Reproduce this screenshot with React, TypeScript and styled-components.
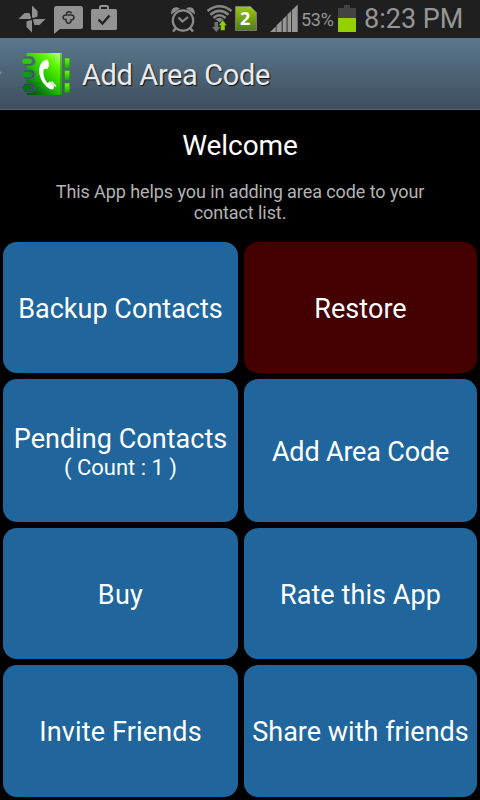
import React from "react";
import styled, { createGlobalStyle } from "styled-components";

const GlobalStyle = createGlobalStyle`
  * { box-sizing: border-box; }
  body { margin: 0; background: #000; }
`;

const Screen = styled.div`
  width: 480px;
  height: 800px;
  display: flex;
  flex-direction: column;
  overflow: hidden;
  background: #000;
  color: #fff;
  font-family: Roboto, "Liberation Sans", sans-serif;
`;

const StatusBar = styled.header`
  height: 38px;
  flex: none;
  display: flex;
  background: #1f1f1f;
  color: #969696;
`;

const StatusIcons = styled.svg`
  display: block;
  width: 300px;
  height: 38px;
  flex: none;
`;

const BatteryLevel = styled.span`
  width: 34px;
  margin-left: 1px;
  font-size: 18px;
  line-height: 40px;
  letter-spacing: -0.3px;
  white-space: nowrap;
`;

const BatteryIcon = styled.svg`
  display: block;
  width: 18px;
  height: 38px;
  margin-left: 3px;
`;

const Clock = styled.time`
  margin-left: 8px;
  font-size: 27px;
  line-height: 38px;
  letter-spacing: 0;
  white-space: nowrap;
`;

const TitleBar = styled.div`
  height: 72px;
  flex: none;
  display: flex;
  background: linear-gradient(#5a788d, #3e4e5f);
  border-bottom: 1px solid #50697a;
`;

const AppLogo = styled.svg`
  display: block;
  width: 72px;
  height: 71px;
  flex: none;
`;

const AppTitle = styled.h1`
  margin: 0 0 0 10px;
  font-size: 29px;
  font-weight: 400;
  line-height: 74px;
  letter-spacing: -0.37px;
  color: #ebebeb;
  text-shadow: 1px 1px 1px #111;
  white-space: nowrap;
`;

const Intro = styled.section`
  height: 132px;
  flex: none;
  text-align: center;
`;

const Welcome = styled.h2`
  margin: 18px 0 0;
  font-size: 28px;
  font-weight: 400;
  line-height: 36px;
  letter-spacing: -0.1px;
`;

const Description = styled.p`
  margin: 17px 50px 0;
  font-size: 18px;
  line-height: 21px;
  letter-spacing: -0.08px;
  color: #b3b3b3;
`;

const Grid = styled.main`
  display: grid;
  grid-template-columns: 235px 233px;
  grid-template-rows: 131px 143px 131px 132px;
  gap: 6px;
  padding: 0 3px;
`;

const Tile = styled.button<{ $danger?: boolean }>`
  display: flex;
  flex-direction: column;
  align-items: center;
  justify-content: center;
  border: 0;
  padding: 2px 0 0;
  border-radius: 14px;
  background: ${(p) => (p.$danger ? "#440000" : "#20669c")};
  color: #fff;
  font-family: inherit;
`;

const TileLabel = styled.span<{ $spacing: number }>`
  font-size: 27px;
  line-height: 32px;
  letter-spacing: ${(p) => p.$spacing}px;
  white-space: nowrap;
`;

const TileCount = styled.span`
  font-size: 22px;
  line-height: 26px;
  white-space: nowrap;
`;

const tiles = [
  { label: "Backup Contacts", spacing: 0.02 },
  { label: "Restore", spacing: 0.05, danger: true },
  { label: "Pending Contacts", spacing: 0.03, count: "( Count : 1 )" },
  { label: "Add Area Code", spacing: -0.18 },
  { label: "Buy", spacing: 0.3 },
  { label: "Rate this App", spacing: 0.08 },
  { label: "Invite Friends", spacing: 0.15 },
  { label: "Share with friends", spacing: 0.02 },
];

function NotificationIcons() {
  return (
    <StatusIcons viewBox="0 0 300 38">
      <defs>
        <linearGradient id="sim" x2="0" y2="1">
          <stop stopColor="#9ac715" />
          <stop offset="1" stopColor="#4f7d10" />
        </linearGradient>
      </defs>
      {/* pinwheel */}
      <g fill="#8f8f8f">
        <path d="M32 5.500 37.500 11V16.500L32 18.500Z" />
        <path d="M45.500 19 39.500 25H34.500L32.500 19Z" />
        <path d="M32 32.500 26.500 27V21.500L32 19.500Z" />
        <path d="M18.500 19 24.500 13H29.500L31.500 19Z" />
      </g>
      <circle cx="32" cy="19" r="1.600" fill="#1f1f1f" />
      {/* message */}
      <path d="M56.500 6H80.500Q83 6 83 8.500V26.500Q83 29 80.500 29H60L54 34V8.500Q54 6 56.500 6Z" fill="#929292" />
      <path
        d="M71.500 13.500C70.500 10.500 66 11.500 66.500 15C62 14.500 62 20 66 19.500C65.500 24.500 71.500 24.500 71 20C75 20 75 14.500 71 15H67.500"
        fill="none" stroke="#2c2c2c" strokeWidth="1.500"
      />
      {/* shopping bag */}
      <rect x="91" y="9" width="26" height="21" rx="1.600" fill="#929292" />
      <path d="M100 9.500V7.500Q100 6 101.500 6H106.500Q108 6 108 7.500V9.500" fill="none" stroke="#929292" strokeWidth="2" />
      <path d="M98.500 19.500 102.500 23.500 109.500 15.500" fill="none" stroke="#222" strokeWidth="2.400" />
      {/* alarm clock */}
      <g fill="none" stroke="#8b8b8b">
        <circle cx="183" cy="20.500" r="10.200" strokeWidth="2.200" />
        <path d="M178.500 17.500 182.500 21.500 188 17" strokeWidth="2.200" />
        <path d="M176 28 173 31.500M190 28 193 31.500" strokeWidth="2.600" />
      </g>
      <path d="M171 14.500C171 8.500 174.500 5.500 180 8.500ZM195 14.500C195 8.500 191.500 5.500 186 8.500Z" fill="#8b8b8b" />
      {/* wifi */}
      <g fill="none" stroke="#858585" strokeWidth="2.600">
        <path d="M207.500 11Q219.500 1.500 231.500 11" />
        <path d="M210.500 14.700Q219.500 7 228.500 14.700" />
        <path d="M213.500 18Q219.500 12.500 225.500 18" />
      </g>
      <path d="M215.500 19.300Q219.500 16 223.500 19.300L219.500 22.500Z" fill="#858585" />
      <path d="M214.500 22H218V27H220.500L216.300 32 212 27H214.500Z" fill="#727272" />
      <path d="M220.500 30.500V25.500H218.500L222.700 19.500 227 25.500H225V30.500Z" fill="#8fcf00" stroke="#1f1f1f" strokeWidth=".5" />
      {/* sim card */}
      <path d="M235.500 6.500H250.500L256.500 12.500V30.500H235.500Z" fill="url(#sim)" stroke="#747b68" />
      <text x="245.200" y="25" textAnchor="middle" fill="#fff" fontSize="18" fontWeight="700" fontFamily="Open Sans, sans-serif">2</text>
      {/* signal strength */}
      <g fill="#969696">
        <path d="M270 32 275.800 26.500V32Z" />
        <path d="M276.500 25.500 281.700 20.300V32H276.500Z" />
        <path d="M282.600 19.400 286.600 15.400V32H282.600Z" />
        <path d="M287.500 14.500 291 11V32H287.500Z" />
        <path d="M291.800 10.200 297.700 4.500V32H291.800Z" />
      </g>
    </StatusIcons>
  );
}

function Logo() {
  return (
    <AppLogo viewBox="0 0 72 71">
      <defs>
        <linearGradient id="cover" x1="1" y1="0" x2=".25" y2="1">
          <stop stopColor="#c5ff99" />
          <stop offset=".28" stopColor="#5df500" />
          <stop offset=".6" stopColor="#23c600" />
          <stop offset="1" stopColor="#005d12" />
        </linearGradient>
        <linearGradient id="tab" x2="0" y2="1">
          <stop stopColor="#70ff00" />
          <stop offset="1" stopColor="#16a80b" />
        </linearGradient>
      </defs>
      <path d="M0 33 2 35 0 37Z" fill="#6d8798" />
      <rect x="26.500" y="15" width="35.500" height="42" rx="1" fill="url(#cover)" />
      <path d="M61 15.500V57" stroke="#187a18" strokeWidth="1" />
      {[23.200, 36.500, 49.800].map((y, i) => (
        <g key={y}>
          <path
            d={`M26 ${y - 4.900}H30.500A4.900 4.900 0 0 1 30.500 ${y + 4.900}H26Z`}
            fill={["#4f6b7b", "#4a6272", "#455868"][i]}
          />
          <path
            d={`M24 ${y - 3.500}H30A3.500 3.500 0 0 1 30 ${y + 3.500}H24`}
            fill="none"
            stroke={["#2d6b45", "#235a3f", "#1c4838"][i]}
            strokeWidth=".9"
          />
          <rect x="22.300" y={y - 2.500} width="9.500" height="5" rx="2.200" fill={["#2fc516", "#0e9a17", "#046c1b"][i]} />
        </g>
      ))}
      <path
        d="M44 22.500C37 27 38 39 44.500 46.500C47.500 50 51 52.500 53.500 51L54 48L50 43.500L47.500 45C44 41 42.500 35 44 31L47.500 31L48.500 25.500Q47.500 20.500 44 22.500Z"
        fill="#fff"
      />
      <path d="M46.800 21.700Q48.800 24.500 48.300 29M51.500 43.500 56 48.500" fill="none" stroke="#fff" strokeWidth="1.300" />
      {[20, 32.500, 45].map((y) => (
        <rect key={y} x="64.500" y={y} width="5.300" height={y === 20 ? 10.500 : 9.800} rx=".8" fill="url(#tab)" stroke="#2f7f35" strokeWidth=".6" />
      ))}
    </AppLogo>
  );
}

export default function App() {
  return (
    <Screen>
      <GlobalStyle />
      <StatusBar>
        <NotificationIcons />
        <BatteryLevel>53%</BatteryLevel>
        <BatteryIcon viewBox="0 0 18 38">
          <path d="M0 8H6V5H12V8H18V18H0Z" fill="#434343" />
          <rect y="18" width="18" height="14" fill="#92d000" />
        </BatteryIcon>
        <Clock>8:23 PM</Clock>
      </StatusBar>
      <TitleBar>
        <Logo />
        <AppTitle>Add Area Code</AppTitle>
      </TitleBar>
      <Intro>
        <Welcome>Welcome</Welcome>
        <Description>This App helps you in adding area code to your contact list.</Description>
      </Intro>
      <Grid>
        {tiles.map((tile) => (
          <Tile key={tile.label} $danger={tile.danger}>
            <TileLabel $spacing={tile.spacing}>{tile.label}</TileLabel>
            {tile.count && <TileCount>{tile.count}</TileCount>}
          </Tile>
        ))}
      </Grid>
    </Screen>
  );
}
